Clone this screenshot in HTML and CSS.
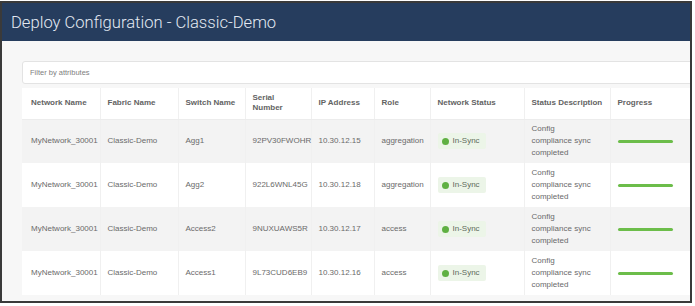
FILE: index.html
```html
<!DOCTYPE html>
<html lang="en">
<head>
  <meta charset="UTF-8" />
  <title>Deploy Configuration - Classic-Demo</title>
  <link rel="stylesheet" href="styles.css">
</head>
<body>
  <div class="frame">
    <div class="modal-header">Deploy Configuration - Classic-Demo</div>

    <div class="modal-body">
      <div class="filter">Filter by attributes</div>

      <table class="deploy-table">
        <thead>
          <tr>
            <th class="c1">Network Name</th>
            <th class="c2">Fabric Name</th>
            <th class="c3">Switch Name</th>
            <th class="c4">Serial<br>Number</th>
            <th class="c5">IP Address</th>
            <th class="c6">Role</th>
            <th class="c7">Network Status</th>
            <th class="c8">Status Description</th>
            <th class="c9">Progress</th>
          </tr>
        </thead>
        <tbody>
          <tr>
            <td>MyNetwork_30001</td>
            <td>Classic-Demo</td>
            <td>Agg1</td>
            <td>92PV30FWOHR</td>
            <td>10.30.12.15</td>
            <td>aggregation</td>
            <td><span class="badge"><span class="dot"></span>In-Sync</span></td>
            <td>Config<br>compliance sync<br>completed</td>
            <td><div class="bar"></div></td>
          </tr>
          <tr>
            <td>MyNetwork_30001</td>
            <td>Classic-Demo</td>
            <td>Agg2</td>
            <td>922L6WNL45G</td>
            <td>10.30.12.18</td>
            <td>aggregation</td>
            <td><span class="badge"><span class="dot"></span>In-Sync</span></td>
            <td>Config<br>compliance sync<br>completed</td>
            <td><div class="bar"></div></td>
          </tr>
          <tr>
            <td>MyNetwork_30001</td>
            <td>Classic-Demo</td>
            <td>Access2</td>
            <td>9NUXUAWS5R</td>
            <td>10.30.12.17</td>
            <td>access</td>
            <td><span class="badge"><span class="dot"></span>In-Sync</span></td>
            <td>Config<br>compliance sync<br>completed</td>
            <td><div class="bar"></div></td>
          </tr>
          <tr>
            <td>MyNetwork_30001</td>
            <td>Classic-Demo</td>
            <td>Access1</td>
            <td>9L73CUD6EB9</td>
            <td>10.30.12.16</td>
            <td>access</td>
            <td><span class="badge"><span class="dot"></span>In-Sync</span></td>
            <td>Config<br>compliance sync<br>completed</td>
            <td><div class="bar"></div></td>
          </tr>
        </tbody>
      </table>
    </div>
  </div>
</body>
</html>
```

FILE: styles.css
```css
* {
  margin: 0;
  padding: 0;
  box-sizing: border-box;
}

body {
  background: #ffffff;
  font-family: 'Liberation Sans', Arial, sans-serif;
  padding-top: 1px;
}

.frame {
  width: 692px;
  height: 302px;
  border: 2px solid #3a3a3a;
  overflow: hidden;
  background: #f7f7f7;
}

.modal-header {
  height: 38px;
  background: #263d5e;
  color: #e3e9f2;
  font-family: Roboto, 'Liberation Sans', sans-serif;
  font-size: 16.6px;
  font-weight: 300;
  padding: 10px 0 0 9px;
}

.modal-body {
  padding: 20px 0 0 20px;
  width: 760px;
}

.filter {
  height: 23px;
  background: #ffffff;
  border: 1px solid #e3e3e3;
  border-radius: 3px;
  font-size: 7.5px;
  color: #808080;
  padding: 6px 0 0 7px;
  margin-bottom: 4px;
}

.deploy-table {
  border-collapse: collapse;
  background: #ffffff;
  font-size: 8px;
  color: #6a6a6a;
  table-layout: fixed;
  width: 740px;
}

.deploy-table th {
  height: 31px;
  text-align: left;
  font-weight: bold;
  color: #636363;
  padding: 0 7px;
  line-height: 10px;
  border-left: 1px solid #f0f0f0;
  border-bottom: 1px solid #ececec;
}

.deploy-table td {
  height: 44px;
  padding: 0 7px;
  line-height: 12px;
  border-left: 1px solid #f0f0f0;
  white-space: nowrap;
}

.deploy-table th:first-child,
.deploy-table td:first-child {
  padding-left: 9px;
  border-left: none;
}

.deploy-table tbody tr:nth-child(odd) td {
  background: #f3f3f3;
}

.c1 { width: 78px; }
.c2 { width: 78px; }
.c3 { width: 67px; }
.c4 { width: 66px; }
.c5 { width: 63px; }
.c6 { width: 56px; }
.c7 { width: 94px; }
.c8 { width: 86px; }
.c9 { width: 152px; }

.badge {
  display: inline-flex;
  align-items: center;
  gap: 4px;
  height: 16px;
  padding: 0 6px 0 4px;
  background: #ecf5e8;
  border-radius: 2px;
  color: #5f6b5b;
}

.dot {
  width: 7px;
  height: 7px;
  border-radius: 50%;
  background: #5fb042;
}

.bar {
  width: 55px;
  height: 3px;
  border-radius: 2px;
  background: #6cbd4a;
}
```
